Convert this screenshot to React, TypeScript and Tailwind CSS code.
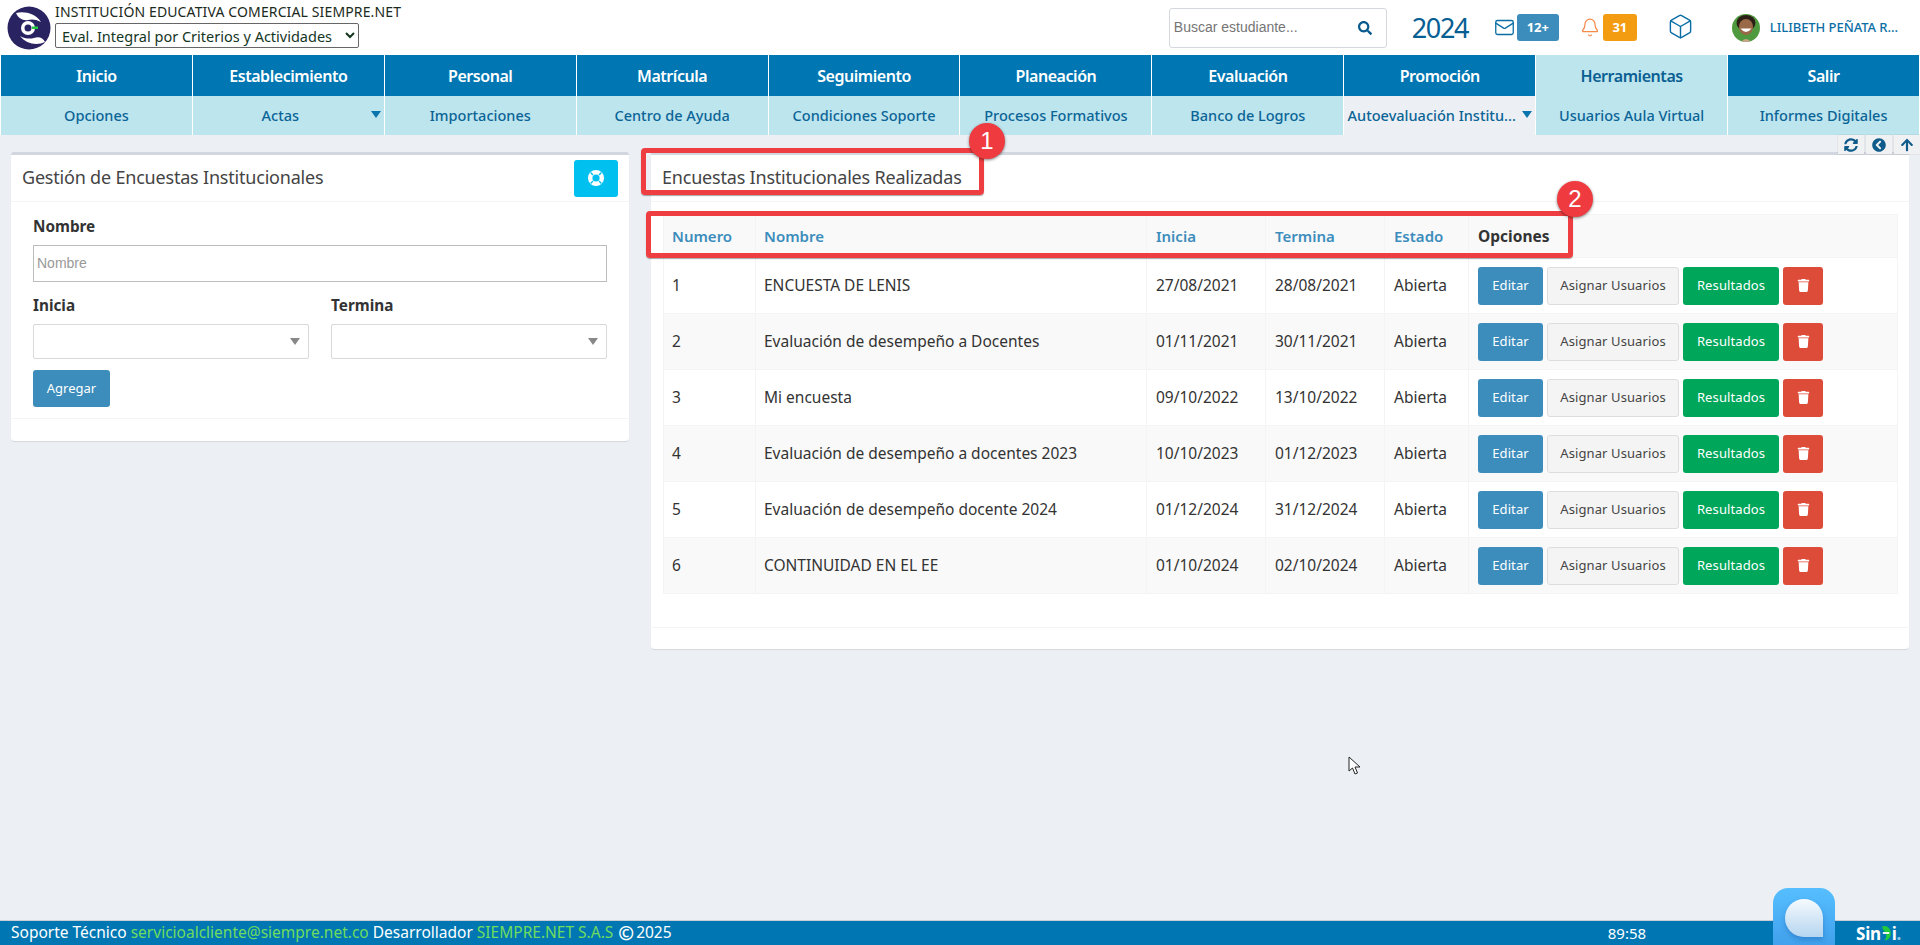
import { Bell, Box, Mail } from "lucide-react";
import { FaArrowUp, FaChevronCircleLeft, FaSearch, FaSyncAlt, FaTrash } from "react-icons/fa";

const mainMenu = ["Inicio", "Establecimiento", "Personal", "Matrícula", "Seguimiento", "Planeación", "Evaluación", "Promoción", "Herramientas", "Salir"];

const subMenu = [
  { label: "Opciones" },
  { label: "Actas", arrow: true },
  { label: "Importaciones" },
  { label: "Centro de Ayuda" },
  { label: "Condiciones Soporte" },
  { label: "Procesos Formativos" },
  { label: "Banco de Logros" },
  { label: "Autoevaluación Institu...", arrow: true, active: true },
  { label: "Usuarios Aula Virtual" },
  { label: "Informes Digitales" },
];

const surveys = [
  { id: 1, name: "ENCUESTA DE LENIS", start: "27/08/2021", end: "28/08/2021" },
  { id: 2, name: "Evaluación de desempeño a Docentes", start: "01/11/2021", end: "30/11/2021" },
  { id: 3, name: "Mi encuesta", start: "09/10/2022", end: "13/10/2022" },
  { id: 4, name: "Evaluación de desempeño a docentes 2023", start: "10/10/2023", end: "01/12/2023" },
  { id: 5, name: "Evaluación de desempeño docente 2024", start: "01/12/2024", end: "31/12/2024" },
  { id: 6, name: "CONTINUIDAD EN EL EE", start: "01/10/2024", end: "02/10/2024" },
];

const Logo = () => (
  <svg viewBox="0 0 44 44" className="w-[44px] h-[44px] shrink-0">
    <circle cx="22" cy="22" r="21.5" fill="#2a2361" />
    <path d="M9 7 C17 5 28 7 34 16 C29 13 24 13 21 14 C16 15 11 12 9 7 Z" fill="#fff" />
    <path d="M38 36 C30 40 19 38 13 30 C18 33 23 33 27 32 C32 30 36 32 38 36 Z" fill="#fff" />
    <circle cx="21" cy="22" r="7" fill="#fff" />
    <circle cx="21" cy="22" r="3.5" fill="#2a2361" />
    <rect x="25" y="20.5" width="6" height="2.5" fill="#22c93c" />
  </svg>
);

const Avatar = () => (
  <svg viewBox="0 0 28 28" className="w-[28px] h-[28px] rounded-full shrink-0">
    <rect width="28" height="28" fill="#4f9a3f" />
    <ellipse cx="14" cy="9" rx="9.5" ry="8" fill="#2c1f16" />
    <ellipse cx="14" cy="13" rx="7" ry="8" fill="#9a6a48" />
    <path d="M8.5 14.5 Q14 21.5 19.5 14.5 Z" fill="#fff" />
    <path d="M9 28 Q14 22 19 28 Z" fill="#c9a58c" />
  </svg>
);

const LifeRing = () => (
  <svg viewBox="0 0 16 16" className="w-[16px] h-[16px]">
    <circle cx="8" cy="8" r="8" fill="#fff" />
    <circle cx="8" cy="8" r="3.6" fill="#00c0ef" />
    <path d="M2.6 2.6 L5 5 M13.4 2.6 L11 5 M2.6 13.4 L5 11 M13.4 13.4 L11 11" stroke="#00c0ef" strokeWidth="1.4" />
  </svg>
);

const SinLogo = () => (
  <div className="flex items-center text-[17px] font-bold leading-none tracking-[-0.3px] text-white">
    Sin
    <svg viewBox="0 0 12 18" className="w-[11px] h-[18px]">
      <path d="M1 2 Q6 0 9 4 Q12 8 10 13 Q8 17 4 17 Q7 12 5 9 Q2 6 1 2 Z" fill="#22c93c" />
      <rect x="2" y="8" width="7" height="2" fill="#fff" />
    </svg>
    i<span className="text-[#8fc6e6]">.</span>
  </div>
);

const Caret = ({ className }: { className: string }) => (
  <span className={`w-0 h-0 border-x-[5px] border-x-transparent border-t-[7px] ${className}`} />
);

const CalloutBadge = ({ n, className }: { n: number; className: string }) => (
  <div className={`absolute w-[36px] h-[36px] rounded-full bg-[#ef3b3f] shadow-[0_1px_3px_rgba(0,0,0,0.5)] flex items-center justify-center text-white text-[24px] font-['Liberation_Sans',sans-serif] ${className}`}>
    {n}
  </div>
);

export default function App() {
  return (
    <div className="relative w-[1920px] h-[945px] overflow-hidden flex flex-col bg-[#ecf0f5] font-['Noto_Sans',sans-serif] text-[#333]">
      {/* Top bar */}
      <header className="h-[55px] bg-white flex items-center pl-[7px] pr-[22px]">
        <Logo />
        <div className="ml-[4px] flex flex-col">
          <div className="text-[14px] leading-[20px] text-[#1a2a20] mt-[-5px] whitespace-nowrap tracking-[0.13px]">INSTITUCIÓN EDUCATIVA COMERCIAL SIEMPRE.NET</div>
          <select className="w-[304px] h-[25px] border border-[#666] rounded-[2px] text-[14.5px] text-[#14361f] bg-white pl-[2px] mt-[1px]">
            <option>Eval. Integral por Criterios y Actividades</option>
          </select>
        </div>
        <div className="ml-auto w-[218px] h-[40px] border border-[#d5d8de] rounded-[3px] flex items-center pl-[4px] pr-[14px] justify-between">
          <span className="text-[14px] text-[#757575] font-['Liberation_Sans',sans-serif]">Buscar estudiante...</span>
          <FaSearch className="text-[#075a8d] text-[14px]" />
        </div>
        <div className="ml-[25px] text-[27px] text-[#065e92] leading-none tracking-[-1.4px] w-[55px]">2024</div>
        <Mail className="ml-[27px] w-[21px] h-[21px] text-[#0a6ea5]" strokeWidth={1.5} />
        <div className="ml-[2px] w-[42px] h-[27px] bg-[#3c8dbc] rounded-[3px] text-white text-[13px] font-bold flex items-center justify-center">12+</div>
        <Bell className="ml-[21px] w-[20px] h-[23px] text-[#f58a4b]" strokeWidth={1.5} />
        <div className="ml-[3px] w-[34px] h-[27px] bg-[#f39c12] rounded-[3px] text-white text-[13px] font-bold flex items-center justify-center">31</div>
        <Box className="ml-[30px] w-[27px] h-[27px] text-[#0a6ea5] mt-[-2px]" strokeWidth={1.25} />
        <div className="ml-[38px]"><Avatar /></div>
        <div className="ml-[10px] text-[13px] font-medium text-[#0a6ea5] whitespace-nowrap tracking-[-0.05px]">LILIBETH PEÑATA R...</div>
      </header>

      {/* Main menu */}
      <nav className="grid grid-cols-10 pl-[1px] bg-white">
        {mainMenu.map((item) => (
          <div
            key={item}
            className={`h-[41px] flex items-center justify-center text-[16px] font-semibold tracking-[-0.45px] border-r border-white ${item === "Herramientas" ? "bg-[#bde5ee] text-[#0b5f92]" : "bg-[#0077b3] text-white"}`}
          >
            {item}
          </div>
        ))}
        {subMenu.map((item) => (
          <div
            key={item.label}
            className={`h-[39px] flex items-center border-r border-white text-[14.5px] font-medium text-[#0b6496] ${item.active ? "bg-[#ecf0f5]" : "bg-[#bde5ee]"} ${item.arrow ? "pl-[1px] pr-[3px]" : "justify-center"}`}
          >
            {item.arrow ? (
              <>
                <span className="flex-1 min-w-0 text-center whitespace-nowrap">{item.label}</span>
                <Caret className="border-t-[#0b75ad] ml-[4px] mt-[-3px]" />
              </>
            ) : (
              item.label
            )}
          </div>
        ))}
      </nav>

      {/* Panel tools */}
      <div className="h-[17px] flex justify-end gap-[2px]">
        {[FaSyncAlt, FaChevronCircleLeft, FaArrowUp].map((Icon, i) => (
          <div key={i} className="w-[26px] h-[19px] bg-[#eff1f3] shadow-[0_0_1px_rgba(0,0,0,0.25)] flex items-center justify-center text-[#0f5c8a] text-[14px] relative z-10">
            <Icon />
          </div>
        ))}
      </div>

      <main className="flex items-start gap-[22px] pl-[11px] pr-[11px]">
        {/* Left panel */}
        <section className="w-[618px] h-[289px] bg-white rounded-[3px] border-t-[3px] border-[#d2d6de] shadow-[0_1px_1px_rgba(0,0,0,0.1)] flex flex-col">
          <div className="h-[47px] border-b border-[#f4f4f4] flex items-center justify-between pl-[11px] pr-[11px]">
            <h3 className="text-[18px] text-[#444] tracking-[-0.2px] mt-[-2px]">Gestión de Encuestas Institucionales</h3>
            <button className="w-[44px] h-[37px] rounded-[3px] bg-[#00c0ef] flex items-center justify-center">
              <LifeRing />
            </button>
          </div>
          <div className="px-[22px] pt-[13px] h-[216px]">
            <label className="block text-[15.3px] font-bold text-[#333] leading-[22px]">Nombre</label>
            <div className="mt-[8px] h-[37px] border border-[#bdbdbd] pl-[3px] flex items-center text-[14px] text-[#999] font-['Liberation_Sans',sans-serif]">Nombre</div>
            <div className="mt-[12px] grid grid-cols-2 gap-[22px]">
              {["Inicia", "Termina"].map((label) => (
                <div key={label}>
                  <label className="block text-[15.3px] font-bold text-[#333] leading-[22px]">{label}</label>
                  <div className="mt-[8px] h-[35px] border border-[#d9d9d9] rounded-[2px] flex items-center justify-end pr-[8px]">
                    <Caret className="border-t-[#888]" />
                  </div>
                </div>
              ))}
            </div>
            <button className="mt-[11px] w-[77px] h-[37px] rounded-[3px] bg-[#3c8dbc] text-white text-[13px]">Agregar</button>
          </div>
          <div className="flex-1 border-t border-[#f4f4f4]" />
        </section>

        {/* Right panel */}
        <section className="w-[1258px] h-[497px] bg-white rounded-[3px] border-t-[3px] border-[#d2d6de] shadow-[0_1px_1px_rgba(0,0,0,0.1)] flex flex-col">
          <div className="h-[47px] border-b border-[#f4f4f4] flex items-center pl-[11px]">
            <h3 className="text-[18px] text-[#444] tracking-[-0.2px] mt-[-2px]">Encuestas Institucionales Realizadas</h3>
          </div>
          <div className="h-[425px] pl-[12px] pr-[11px] pt-[12px]">
            <table className="w-full table-fixed border-collapse text-[15.5px]">
              <colgroup>
                <col className="w-[92px]" />
                <col className="w-[391px]" />
                <col className="w-[119px]" />
                <col className="w-[119px]" />
                <col className="w-[84px]" />
                <col />
              </colgroup>
              <thead>
                <tr className="h-[43px] bg-[#f9f9f9] text-left text-[#3c8dbc] text-[15px]">
                  <th className="border border-[#f4f4f4] pl-[8px] font-semibold">Numero</th>
                  <th className="border border-[#f4f4f4] pl-[8px] font-semibold">Nombre</th>
                  <th className="border border-[#f4f4f4] pl-[9px] font-semibold">Inicia</th>
                  <th className="border border-[#f4f4f4] pl-[9px] font-semibold">Termina</th>
                  <th className="border border-[#f4f4f4] pl-[9px] font-semibold">Estado</th>
                  <th className="border border-[#f4f4f4] pl-[9px] pt-[2px] text-[#333] font-bold text-[15.5px]">Opciones</th>
                </tr>
              </thead>
              <tbody>
                {surveys.map((s) => (
                  <tr key={s.id} className={`h-[56px] ${s.id % 2 === 0 ? "bg-[#f9f9f9]" : "bg-white"}`}>
                    <td className="border border-[#f4f4f4] pl-[8px]">{s.id}</td>
                    <td className="border border-[#f4f4f4] pl-[8px] whitespace-nowrap">{s.name}</td>
                    <td className="border border-[#f4f4f4] pl-[9px]">{s.start}</td>
                    <td className="border border-[#f4f4f4] pl-[9px]">{s.end}</td>
                    <td className="border border-[#f4f4f4] pl-[9px]">Abierta</td>
                    <td className="border border-[#f4f4f4] pl-[9px]">
                      <div className="flex items-center gap-[4px] text-[13px] tracking-[0.1px]">
                        <button className="w-[65px] h-[38px] rounded-[3px] bg-[#3c8dbc] text-white">Editar</button>
                        <button className="w-[132px] h-[38px] rounded-[3px] bg-[#f4f4f4] border border-[#ddd] text-[#444]">Asignar Usuarios</button>
                        <button className="w-[96px] h-[38px] rounded-[3px] bg-[#00a65a] text-white">Resultados</button>
                        <button className="w-[40px] h-[38px] rounded-[3px] bg-[#dd4b39] text-white flex items-center justify-center">
                          <FaTrash />
                        </button>
                      </div>
                    </td>
                  </tr>
                ))}
              </tbody>
            </table>
          </div>
          <div className="flex-1 border-t border-[#f4f4f4]" />
        </section>
      </main>

      {/* Footer */}
      <footer className="mt-auto h-[25px] bg-[#0077b3] border-t border-[#c9ced6] flex items-center pl-[11px] pr-[19px] text-[15.5px] text-white whitespace-nowrap">
        <span>Soporte Técnico</span>
        <span className="ml-[4px] text-[#6fdc5e]">servicioalcliente@siempre.net.co</span>
        <span className="ml-[4px]">Desarrollador</span>
        <span className="ml-[4px] text-[#6fdc5e]">SIEMPRE.NET S.A.S</span>
        <span className="ml-[5px] font-bold text-[19px] leading-none">©</span>
        <span className="ml-[2px]">2025</span>
        <span className="ml-auto mr-[210px] text-[15px]">89:58</span>
        <SinLogo />
      </footer>

      {/* Chat launcher */}
      <div className="absolute left-[1773px] top-[888px] w-[62px] h-[70px] rounded-[15px] bg-gradient-to-b from-[#56bfff] to-[#3d9ae8] flex items-start justify-center pt-[11px]">
        <div className="w-[38px] h-[38px] rounded-t-full rounded-bl-full bg-gradient-to-b from-[#f6fafd] to-[#b5d5f0] shadow-[0_3px_5px_rgba(20,80,160,0.35)]" />
      </div>

      {/* Callouts drawn over the screenshot */}
      <div className="absolute left-[641px] top-[148px] w-[343px] h-[47px] border-[5px] border-[#ef3e42] rounded-[4px] shadow-[0_1px_1px_rgba(0,0,0,0.35)]" />
      <CalloutBadge n={1} className="left-[969px] top-[123px]" />
      <div className="absolute left-[646px] top-[211px] w-[927px] h-[47px] border-[5px] border-[#ef3e42] rounded-[4px] shadow-[0_1px_1px_rgba(0,0,0,0.35)]" />
      <CalloutBadge n={2} className="left-[1557px] top-[181px]" />

      {/* Mouse pointer */}
      <svg viewBox="0 0 14 20" className="absolute left-[1348px] top-[756px] w-[14px] h-[20px]">
        <path d="M1 1 L1 15 L4.5 12 L7 18 L9.5 17 L7 11 L12 11 Z" fill="#fff" stroke="#222" strokeWidth="1" />
      </svg>
    </div>
  );
}
